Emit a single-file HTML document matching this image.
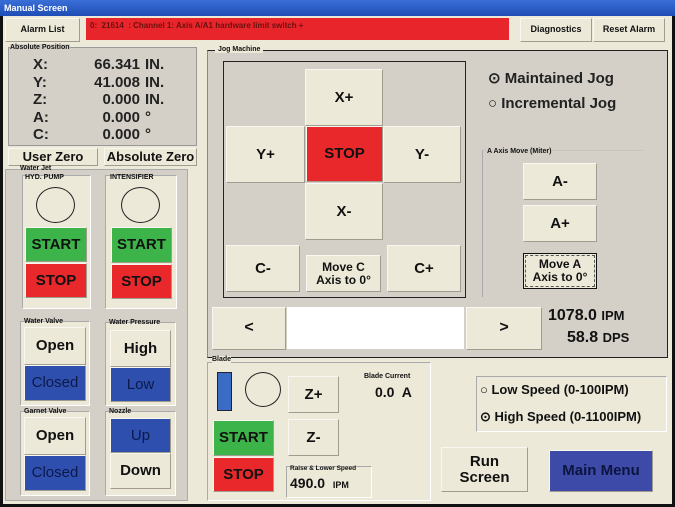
<!DOCTYPE html>
<html><head><meta charset="utf-8"><style>
*{box-sizing:border-box;margin:0;padding:0}
body{width:675px;height:507px;overflow:hidden;background:#fff;font-family:"Liberation Sans",Arial,sans-serif;position:relative}
.a{position:absolute}
.win{left:0;top:0;width:675px;height:507px;background:#ece9d8;border:3px solid #111;border-top:none}
.title{left:0;top:0;width:675px;height:16px;background:linear-gradient(#3a6fd8,#1f4db5);color:#fff;font-size:9px;font-weight:bold;padding:3px 4px}
.b{position:absolute;background:#ece9d8;border:1px solid #f8f7f0;border-right-color:#a09c90;border-bottom-color:#a09c90;display:flex;align-items:center;justify-content:center;text-align:center;font-weight:bold;color:#111;line-height:1.05}
.g{background:#3cb44a}.r{background:#e8282a}.bl{background:#2f4fae;color:#0c1a4a;font-weight:normal}
.grp{position:absolute;border:1px solid #aaa;border-right-color:#fff;border-bottom-color:#fff}
.circ{position:absolute;border:1px solid #222;border-radius:50%}
.t{position:absolute;font-weight:bold;color:#111;white-space:nowrap}
</style></head><body>
<div class="a win"></div>
<div class="a title">Manual Screen</div>
<div class="b" style="left:5px;top:18px;width:75px;height:24px;font-size:9px">Alarm List</div>
<div class="a" style="left:86px;top:18px;width:423px;height:22px;background:#e8252a;color:#6a1010;font-size:8px;font-weight:bold;padding:3px 4px">0:&nbsp; 21614&nbsp; : Channel 1: Axis A/A1 hardware limit switch +</div>
<div class="b" style="left:520px;top:18px;width:72px;height:24px;font-size:9px">Diagnostics</div>
<div class="b" style="left:593px;top:18px;width:72px;height:24px;font-size:9px">Reset Alarm</div>

<div class="a" style="left:8px;top:47px;width:189px;height:99px;background:#d4d0c8;border:1px solid #999"></div>
<div class="t" style="left:10px;top:44px;font-size:7px;background:#d4d0c8">Absolute Position</div>
<div class="a" style="left:33px;top:56px;font-size:15px;line-height:17.5px;color:#222;font-weight:bold">X:<br>Y:<br>Z:<br>A:<br>C:</div>
<div class="a" style="left:70px;top:56px;width:70px;text-align:right;font-size:15px;line-height:17.5px;color:#222;font-weight:bold">66.341<br>41.008<br>0.000<br>0.000<br>0.000</div>
<div class="a" style="left:145px;top:56px;font-size:15px;line-height:17.5px;color:#222;font-weight:bold">IN.<br>IN.<br>IN.<br>°<br>°</div>
<div class="b" style="left:8px;top:148px;width:90px;height:18px;font-size:13px">User Zero</div>
<div class="b" style="left:104px;top:148px;width:93px;height:18px;font-size:13px">Absolute Zero</div>

<div class="a" style="left:5px;top:169px;width:183px;height:332px;background:#d4d0c8;border:1px solid #aaa"></div>
<div class="t" style="left:20px;top:165px;font-size:7px">Water Jet</div>
<div class="grp" style="left:22px;top:175px;width:69px;height:134px;background:#ece9d8"></div>
<div class="t" style="left:25px;top:174px;font-size:7px">HYD. PUMP</div>
<div class="circ" style="left:36px;top:187px;width:39px;height:36px"></div>
<div class="b g" style="left:25px;top:227px;width:62px;height:35px;font-size:15px">START</div>
<div class="b r" style="left:25px;top:263px;width:62px;height:35px;font-size:15px">STOP</div>
<div class="grp" style="left:105px;top:175px;width:72px;height:134px;background:#ece9d8"></div>
<div class="t" style="left:110px;top:174px;font-size:7px">INTENSIFIER</div>
<div class="circ" style="left:121px;top:187px;width:39px;height:36px"></div>
<div class="b g" style="left:111px;top:227px;width:61px;height:36px;font-size:15px">START</div>
<div class="b r" style="left:111px;top:264px;width:61px;height:35px;font-size:15px">STOP</div>

<div class="grp" style="left:20px;top:321px;width:70px;height:85px;background:#ece9d8"></div>
<div class="t" style="left:24px;top:318px;font-size:7px">Water Valve</div>
<div class="b" style="left:24px;top:327px;width:62px;height:38px;font-size:15px">Open</div>
<div class="b bl" style="left:24px;top:365px;width:62px;height:36px;font-size:15px">Closed</div>
<div class="grp" style="left:105px;top:322px;width:71px;height:84px;background:#ece9d8"></div>
<div class="t" style="left:109px;top:319px;font-size:7px">Water Pressure</div>
<div class="b" style="left:110px;top:330px;width:61px;height:37px;font-size:15px">High</div>
<div class="b bl" style="left:110px;top:367px;width:61px;height:35px;font-size:15px">Low</div>

<div class="grp" style="left:20px;top:411px;width:70px;height:85px;background:#ece9d8"></div>
<div class="t" style="left:24px;top:408px;font-size:7px">Garnet Valve</div>
<div class="b" style="left:24px;top:417px;width:62px;height:38px;font-size:15px">Open</div>
<div class="b bl" style="left:24px;top:455px;width:62px;height:36px;font-size:15px">Closed</div>
<div class="grp" style="left:105px;top:411px;width:71px;height:85px;background:#ece9d8"></div>
<div class="t" style="left:109px;top:408px;font-size:7px">Nozzle</div>
<div class="b bl" style="left:110px;top:418px;width:61px;height:35px;font-size:15px">Up</div>
<div class="b" style="left:110px;top:453px;width:61px;height:36px;font-size:15px">Down</div>

<!-- Jog -->
<div class="a" style="left:207px;top:50px;width:461px;height:308px;background:#d4d0c8;border:1px solid #222;border-left-color:#888"></div>
<div class="t" style="left:215px;top:46px;font-size:7px;background:#ece9d8;padding:0 3px">Jog Machine</div>
<div class="a" style="left:223px;top:61px;width:243px;height:237px;border:1px solid #222"></div>
<div class="b" style="left:305px;top:69px;width:78px;height:57px;font-size:15px">X+</div>
<div class="b" style="left:226px;top:126px;width:79px;height:57px;font-size:15px">Y+</div>
<div class="b r" style="left:306px;top:126px;width:77px;height:56px;font-size:15px">STOP</div>
<div class="b" style="left:383px;top:126px;width:78px;height:57px;font-size:15px">Y-</div>
<div class="b" style="left:305px;top:183px;width:78px;height:57px;font-size:15px">X-</div>
<div class="b" style="left:226px;top:245px;width:74px;height:47px;font-size:15px">C-</div>
<div class="b" style="left:306px;top:255px;width:75px;height:37px;font-size:12px">Move C<br>Axis to 0°</div>
<div class="b" style="left:387px;top:245px;width:74px;height:47px;font-size:15px">C+</div>
<div class="t" style="left:488px;top:69px;font-size:15px;color:#222">⊙ Maintained Jog</div>
<div class="t" style="left:488px;top:95px;font-size:15px;color:#222">○ Incremental Jog</div>
<div class="a" style="left:482px;top:150px;width:161px;height:147px;border-left:1px solid #aaa;border-top:1px solid #c8c4bc"></div>
<div class="t" style="left:487px;top:148px;font-size:7px;background:#d4d0c8">A Axis Move (Miter)</div>
<div class="b" style="left:523px;top:163px;width:74px;height:37px;font-size:15px">A-</div>
<div class="b" style="left:523px;top:205px;width:74px;height:37px;font-size:15px">A+</div>
<div class="b" style="left:523px;top:253px;width:74px;height:36px;font-size:12px;border:1px solid #111;outline:1px dashed #555;outline-offset:-3px">Move A<br>Axis to 0°</div>
<div class="b" style="left:212px;top:307px;width:74px;height:43px;font-size:16px">&lt;</div>
<div class="a" style="left:287px;top:307px;width:177px;height:42px;background:#fff"></div>
<div class="b" style="left:466px;top:307px;width:76px;height:43px;font-size:16px">&gt;</div>
<div class="t" style="left:548px;top:307px;font-size:16px">1078.0 <span style="font-size:13px">IPM</span></div>
<div class="t" style="left:567px;top:329px;font-size:16px">58.8 <span style="font-size:13px">DPS</span></div>

<!-- Blade -->
<div class="grp" style="left:207px;top:362px;width:224px;height:139px"></div>
<div class="t" style="left:212px;top:356px;font-size:7px;background:#ece9d8">Blade</div>
<div class="a" style="left:217px;top:372px;width:15px;height:39px;background:#3a6cc4;border:1px solid #223"></div>
<div class="circ" style="left:245px;top:372px;width:36px;height:35px"></div>
<div class="b" style="left:288px;top:376px;width:51px;height:37px;font-size:15px">Z+</div>
<div class="b" style="left:288px;top:419px;width:51px;height:37px;font-size:15px">Z-</div>
<div class="b g" style="left:213px;top:420px;width:61px;height:36px;font-size:15px">START</div>
<div class="b r" style="left:213px;top:457px;width:61px;height:35px;font-size:15px">STOP</div>
<div class="t" style="left:364px;top:373px;font-size:7px">Blade Current</div>
<div class="t" style="left:375px;top:384px;font-size:14px">0.0&nbsp; A</div>
<div class="grp" style="left:286px;top:466px;width:86px;height:32px"></div>
<div class="t" style="left:290px;top:465px;font-size:6.5px">Raise &amp; Lower Speed</div>
<div class="t" style="left:290px;top:475px;font-size:14px">490.0 &nbsp;<span style="font-size:9px">IPM</span></div>
<div class="grp" style="left:476px;top:376px;width:191px;height:56px"></div>
<div class="t" style="left:480px;top:382px;font-size:13px">○ Low Speed (0-100IPM)</div>
<div class="t" style="left:480px;top:409px;font-size:13px">⊙ High Speed (0-1100IPM)</div>
<div class="b" style="left:441px;top:447px;width:87px;height:45px;font-size:15px">Run<br>Screen</div>
<div class="b" style="left:549px;top:450px;width:104px;height:42px;font-size:15px;background:#3e4aa8;color:#0c1440;font-weight:bold">Main Menu</div>
</body></html>
